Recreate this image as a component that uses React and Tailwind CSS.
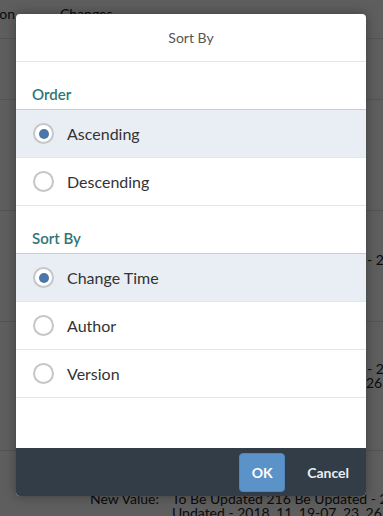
import React from "react";

const font = { fontFamily: "Lato, 'Open Sans', sans-serif" };

function Radio({ checked }) {
  return (
    <span className="flex h-[21px] w-[21px] shrink-0 items-center justify-center rounded-full border-2 border-[#c6c6c6] bg-white">
      {checked && <span className="h-[10px] w-[10px] rounded-full bg-[#4a77a9]" />}
    </span>
  );
}

function Item({ label, checked }) {
  return (
    <div
      className={`flex h-[48px] items-center border-b border-[#e5e5e5] pl-[17px] ${
        checked ? "bg-[#e9eef4]" : "bg-white"
      }`}
    >
      <Radio checked={checked} />
      <span className="ml-[13px] text-[16px] text-[#333]">{label}</span>
    </div>
  );
}

function Group({ label }) {
  return (
    <div className="flex h-[48px] items-end border-b border-[#cccccc] pb-[4px] pl-[16px]">
      <span className="text-[15px] font-semibold text-[#2f7675]">{label}</span>
    </div>
  );
}

export default function App() {
  return (
    <div className="relative h-[516px] w-[383px] overflow-hidden bg-white" style={font}>
      {/* background page */}
      <div className="flex flex-col text-[14px] text-[#222]">
        <div className="flex h-[39px] items-start border-b border-[#e2e2e2] pt-[3px]">
          <div className="flex w-[15px] justify-end">
            <span className="whitespace-nowrap">Version</span>
          </div>
          <span className="ml-[45px]">Changes</span>
        </div>
        <div className="h-[61px] border-b border-[#e2e2e2]" />
        <div className="h-[111px] border-b border-[#e2e2e2]" />
        <div className="h-[111px] border-b border-[#e2e2e2] pt-[38px]">
          <div className="ml-[367px] whitespace-nowrap">- 2</div>
        </div>
        <div className="h-[129px] border-b border-[#e2e2e2] pt-[40px] leading-[14px]">
          <div className="ml-[367px] whitespace-nowrap">- 2</div>
          <div className="ml-[366px] whitespace-nowrap">26</div>
        </div>
        <div className="flex pt-[41px] leading-[14px]">
          <span className="ml-[90px] w-[82px] shrink-0 whitespace-nowrap text-[#222]">New Value:</span>
          <div className="whitespace-nowrap">
            <div>To Be Updated 216 Be Updated - 2</div>
            <div>Updated - 2018_11_19-07_23_26</div>
          </div>
        </div>
      </div>

      {/* overlay */}
      <div className="absolute inset-0 bg-black/[0.63]" />

      {/* dialog */}
      <div className="absolute left-[16px] top-[14px] flex h-[482px] w-[350px] flex-col overflow-hidden rounded-[4px] bg-white shadow-[0_0_12px_rgba(0,0,0,0.35)]">
        <div className="flex h-[48px] shrink-0 items-center justify-center border-b border-[#e5e5e5] text-[14px] text-[#555]">
          Sort By
        </div>
        <Group label="Order" />
        <Item label="Ascending" checked />
        <Item label="Descending" />
        <Group label="Sort By" />
        <Item label="Change Time" checked />
        <Item label="Author" />
        <Item label="Version" />
        <div className="flex-1" />
        <div className="flex h-[48px] shrink-0 items-center justify-end bg-[#333d47] pr-[13px]">
          <button className="h-[39px] w-[46px] rounded-[4px] border border-[#4f86bb] bg-[#5b93c8] text-[14px] font-bold text-white">
            OK
          </button>
          <button className="ml-[18px] h-[39px] px-[4px] text-[14px] font-bold text-[#e8eef4]">
            Cancel
          </button>
        </div>
      </div>
    </div>
  );
}
